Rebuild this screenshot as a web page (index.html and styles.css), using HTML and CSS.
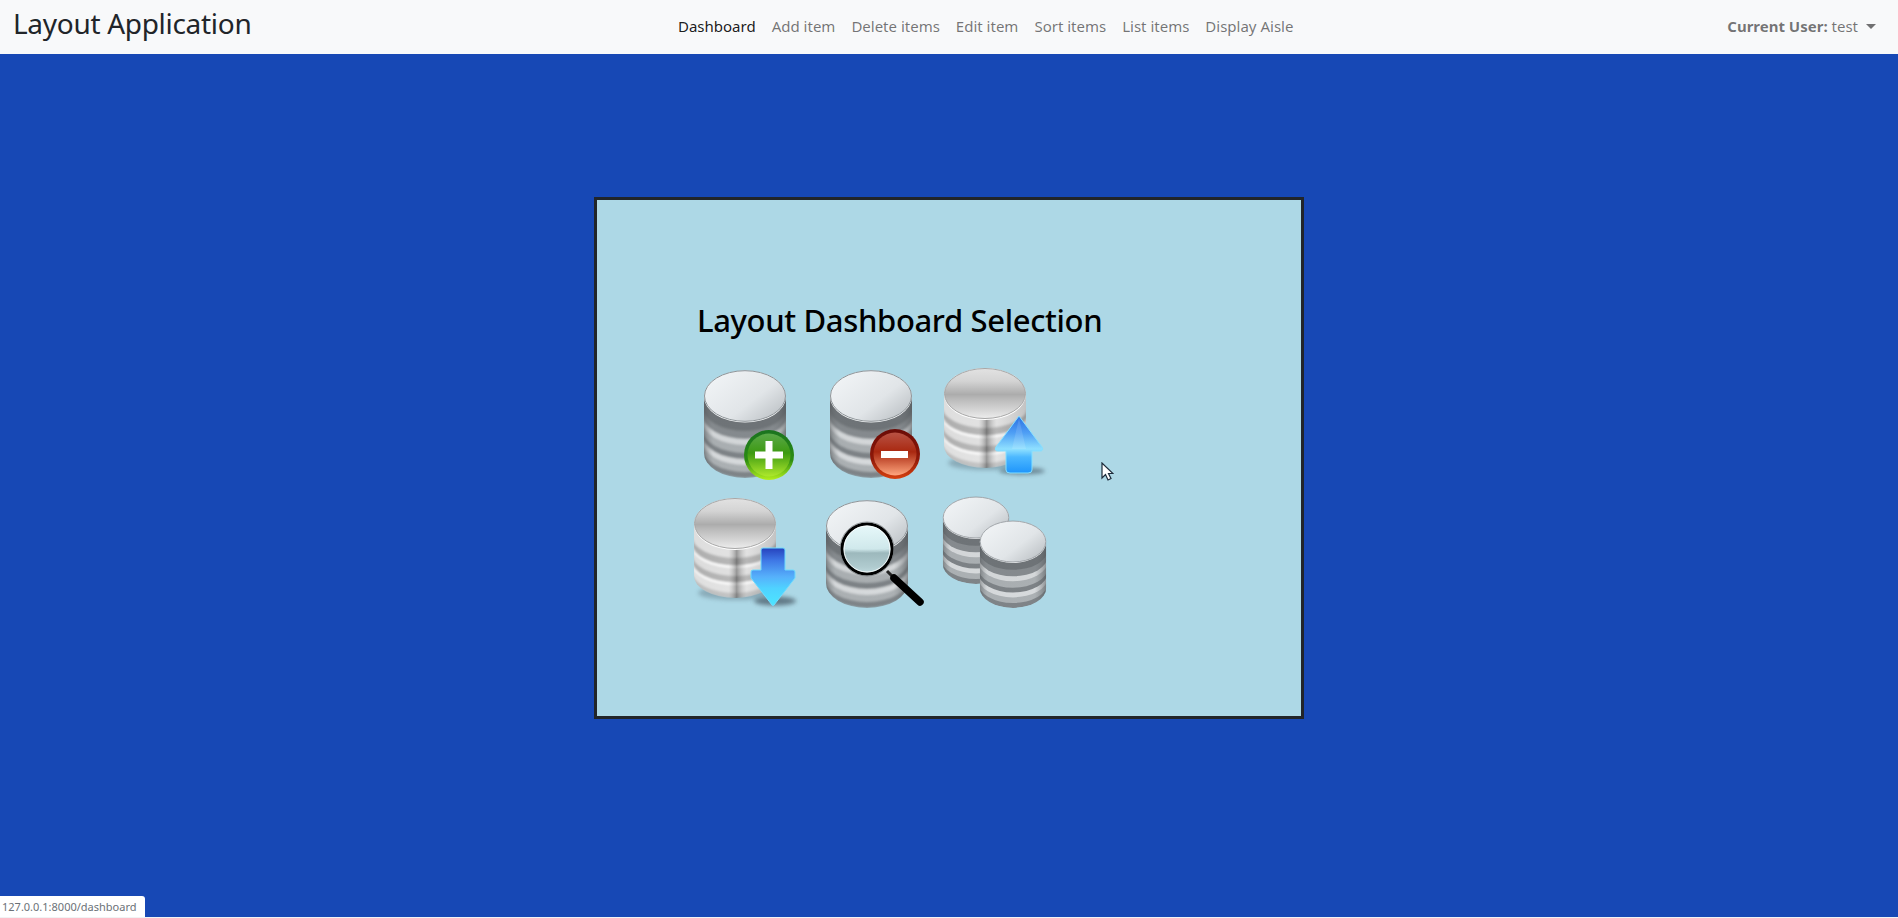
FILE: index.html
```html
<!DOCTYPE html>
<html lang="en">
<head>
<meta charset="utf-8">
<title>Layout Application</title>
<link rel="stylesheet" href="styles.css">
</head>
<body>
<svg class="defs" width="0" height="0" aria-hidden="true">
  <defs>
    <filter id="soft" x="-5%" y="-5%" width="110%" height="110%"><feGaussianBlur stdDeviation="0.8"/></filter>
    <filter id="shade" x="-30%" y="-80%" width="160%" height="260%"><feGaussianBlur stdDeviation="2"/></filter>
    <linearGradient id="face" x1="0" y1="0.1" x2="1" y2="0.9">
      <stop offset="0" stop-color="#f2f5f7"/><stop offset=".6" stop-color="#e1e5e8"/><stop offset="1" stop-color="#b9bec2"/>
    </linearGradient>
    <linearGradient id="edge" x1="0" y1="0" x2="1" y2="0">
      <stop offset="0" stop-color="#4d5154" stop-opacity=".55"/><stop offset=".12" stop-color="#7a7f82" stop-opacity=".1"/><stop offset=".82" stop-color="#7a7f82" stop-opacity=".08"/><stop offset="1" stop-color="#4d5154" stop-opacity=".6"/>
    </linearGradient>
    <linearGradient id="gface" x1="0" y1="0" x2="0" y2="1">
      <stop offset="0" stop-color="#e2e2e2"/><stop offset=".25" stop-color="#d4d4d4"/><stop offset=".52" stop-color="#acacac"/><stop offset=".6" stop-color="#b8b8b8"/><stop offset=".85" stop-color="#d8d8d8"/><stop offset="1" stop-color="#ededed"/>
    </linearGradient>
    <linearGradient id="gedge" x1="0" y1="0" x2="1" y2="0">
      <stop offset="0" stop-color="#fff" stop-opacity=".1"/><stop offset=".42" stop-color="#fff" stop-opacity=".2"/><stop offset=".52" stop-color="#444" stop-opacity=".45"/><stop offset=".64" stop-color="#fff" stop-opacity=".2"/><stop offset="1" stop-color="#777" stop-opacity=".25"/>
    </linearGradient>
    <linearGradient id="grim" x1="0" y1="0" x2="0" y2="1">
      <stop offset="0" stop-color="#1a7320"/><stop offset=".6" stop-color="#2b8c12"/><stop offset="1" stop-color="#b3f01e"/>
    </linearGradient>
    <linearGradient id="gin" x1="0" y1="0" x2="0" y2="1">
      <stop offset="0" stop-color="#5aa84a"/><stop offset=".45" stop-color="#3d9a12"/><stop offset="1" stop-color="#aee82c"/>
    </linearGradient>
    <linearGradient id="rrim" x1="0" y1="0" x2="0" y2="1">
      <stop offset="0" stop-color="#6a0c07"/><stop offset=".6" stop-color="#8f1808"/><stop offset="1" stop-color="#d8420f"/>
    </linearGradient>
    <linearGradient id="rin" x1="0" y1="0" x2="0" y2="1">
      <stop offset="0" stop-color="#b85244"/><stop offset=".45" stop-color="#a92810"/><stop offset="1" stop-color="#ffa67e"/>
    </linearGradient>
    <linearGradient id="aup" x1="0" y1="0" x2="0" y2="1">
      <stop offset="0" stop-color="#2a6fe2"/><stop offset=".3" stop-color="#4f9ff5"/><stop offset=".58" stop-color="#8fe0ff"/><stop offset=".72" stop-color="#4cb8ff"/><stop offset="1" stop-color="#1f95fb"/>
    </linearGradient>
    <linearGradient id="adown" x1="0" y1="0" x2="0" y2="1">
      <stop offset="0" stop-color="#2642bd"/><stop offset=".22" stop-color="#3f78e6"/><stop offset=".5" stop-color="#56b0fb"/><stop offset=".7" stop-color="#4fd2ff"/><stop offset="1" stop-color="#4ce6ff"/>
    </linearGradient>
    <linearGradient id="glass" x1="0" y1="0" x2="0" y2="1">
      <stop offset="0" stop-color="#e8fafb"/><stop offset=".5" stop-color="#cfe9ec"/><stop offset=".58" stop-color="#9fbcc0"/><stop offset="1" stop-color="#bcd8dc"/>
    </linearGradient>
    <clipPath id="sil"><path d="M1 26V83A41 25 0 0 0 83 83V26Z"/></clipPath>
    <clipPath id="gsil"><path d="M1 24V78A41 22 0 0 0 83 78V24Z"/></clipPath>
    <symbol id="db" viewBox="0 0 84 110">
      <g clip-path="url(#sil)">
        <g filter="url(#soft)">
          <path d="M-1 20H85V83A43 25 0 0 1 -1 83Z" fill="#7f8488"/>
          <path d="M-1 20H85V77A43 25 0 0 1 -1 77Z" fill="#b0b5b8"/>
          <path d="M-1 20H85V70A43 25 0 0 1 -1 70Z" fill="#dfe2e4"/>
          <path d="M-1 20H85V64A43 25 0 0 1 -1 64Z" fill="#7d8286"/>
          <path d="M-1 20H85V58A43 25 0 0 1 -1 58Z" fill="#aeb3b6"/>
          <path d="M-1 20H85V50A43 25 0 0 1 -1 50Z" fill="#dcdfe1"/>
          <path d="M-1 20H85V44A43 25 0 0 1 -1 44Z" fill="#868b8f"/>
          <path d="M-1 20H85V36A43 25 0 0 1 -1 36Z" fill="#6d7276"/>
        </g>
        <rect x="0" y="20" width="84" height="90" fill="url(#edge)"/>
      </g>
      <ellipse cx="42" cy="26.5" rx="41" ry="26" fill="#f7f9fa"/>
      <ellipse cx="42" cy="26" rx="40.5" ry="25.3" fill="url(#face)" stroke="#8f9599" stroke-width="1"/>
    </symbol>
    <symbol id="gdb" viewBox="0 0 84 104">
      <g clip-path="url(#gsil)">
        <g filter="url(#soft)">
          <path d="M-1 20H85V78A43 22 0 0 1 -1 78Z" fill="#b5b5b5"/>
          <path d="M-1 20H85V73A43 22 0 0 1 -1 73Z" fill="#dcdcdc"/>
          <path d="M-1 20H85V65A43 22 0 0 1 -1 65Z" fill="#fdfdfd"/>
          <path d="M-1 20H85V62.500A43 22 0 0 1 -1 62.500Z" fill="#a6a6a6"/>
          <path d="M-1 20H85V56A43 22 0 0 1 -1 56Z" fill="#d8d8d8"/>
          <path d="M-1 20H85V48A43 22 0 0 1 -1 48Z" fill="#fdfdfd"/>
          <path d="M-1 20H85V45.500A43 22 0 0 1 -1 45.500Z" fill="#a4a4a4"/>
          <path d="M-1 20H85V38A43 22 0 0 1 -1 38Z" fill="#dadada"/>
        </g>
        <rect x="0" y="20" width="84" height="84" fill="url(#gedge)"/>
      </g>
      <ellipse cx="42" cy="26" rx="41" ry="26" fill="#fff"/>
      <ellipse cx="42" cy="25.5" rx="40.5" ry="25" fill="url(#gface)" stroke="#a6a6a6" stroke-width="1"/>
    </symbol>
  </defs>
</svg>

<header class="navbar">
  <a class="brand" href="#">Layout Application</a>
  <nav class="links">
    <a class="link active" href="#">Dashboard</a>
    <a class="link" href="#">Add item</a>
    <a class="link" href="#">Delete items</a>
    <a class="link" href="#">Edit item</a>
    <a class="link" href="#">Sort items</a>
    <a class="link" href="#">List items</a>
    <a class="link" href="#">Display Aisle</a>
  </nav>
  <a class="user" href="#"><b>Current User:</b> test<span class="caret"></span></a>
</header>

<main class="stage">
  <section class="card">
    <h1 class="title">Layout Dashboard Selection</h1>
    <div class="icons">
      <a href="#" class="icon"><svg viewBox="0 0 120 125" width="120" height="125">
        <use href="#db" x="13" y="5" width="84" height="110"/>
        <circle cx="79" cy="90" r="25" fill="url(#grim)"/>
        <circle cx="79" cy="90" r="21.5" fill="url(#gin)"/>
        <path d="M75.5 76h7v10.500h10.500v7h-10.500v10.500h-7v-10.500h-10.500v-7h10.500z" fill="#fff"/>
      </svg></a>
      <a href="#" class="icon"><svg viewBox="0 0 120 125" width="120" height="125">
        <use href="#db" x="19" y="5" width="84" height="110"/>
        <circle cx="85" cy="89" r="25" fill="url(#rrim)"/>
        <circle cx="85" cy="89" r="21.5" fill="url(#rin)"/>
        <rect x="71" y="86" width="27" height="7" fill="#fff"/>
      </svg></a>
      <a href="#" class="icon"><svg viewBox="0 0 120 125" width="120" height="125">
        <ellipse cx="56" cy="98" rx="38" ry="7" fill="#6d8794" opacity=".55" filter="url(#shade)"/>
        <use href="#gdb" x="13" y="3" width="84" height="104"/>
        <ellipse cx="92" cy="106" rx="23" ry="3.500" fill="#546d7a" opacity=".75" filter="url(#shade)"/>
        <path d="M89 51L112 82Q114 86 110 86H102V105Q102 108 98 108H80Q76 108 76 105V86H68Q64 86 66 82Z" fill="url(#aup)" stroke="#86e0ff" stroke-width="1"/>
        <path d="M89 53L96 84H82Z" fill="#fff" opacity=".12"/>
      </svg></a>
      <a href="#" class="icon"><svg viewBox="0 0 120 125" width="120" height="125">
        <ellipse cx="46" cy="98" rx="38" ry="7" fill="#6d8794" opacity=".55" filter="url(#shade)"/>
        <use href="#gdb" x="3" y="3" width="84" height="104"/>
        <ellipse cx="85" cy="106" rx="21" ry="4.500" fill="#4f6470" opacity=".8" filter="url(#shade)"/>
        <path d="M71 55Q71 53 73 53H93Q95 53 95 55V75H103Q105 75 105 77V83L84 110Q83 111 82 110L61 83V77Q61 75 63 75H71Z" fill="url(#adown)" stroke="#6fdcff" stroke-width="1"/>
      </svg></a>
      <a href="#" class="icon"><svg viewBox="0 0 120 125" width="120" height="125">
        <use href="#db" x="15" y="5" width="84" height="110"/>
        <path d="M77 76L83 82" stroke="#222" stroke-width="3"/>
        <path d="M84 83L110 107" stroke="#000" stroke-width="7.500" stroke-linecap="round"/>
        <circle cx="57" cy="54" r="25" fill="url(#glass)" fill-opacity=".95" stroke="#000" stroke-width="3"/>
        <circle cx="57" cy="54" r="27" fill="none" stroke="#6f7578" stroke-opacity=".7" stroke-width="1"/>
        <circle cx="57" cy="54" r="23" fill="none" stroke="#fff" stroke-opacity=".8" stroke-width="1"/>
      </svg></a>
      <a href="#" class="icon"><svg viewBox="0 0 120 125" width="120" height="125">
        <use href="#db" x="12" y="1" width="68" height="90"/>
        <use href="#db" x="49" y="25" width="68" height="90"/>
      </svg></a>
    </div>
  </section>
</main>

<svg class="cursor" viewBox="0 0 13 20" width="13" height="20" aria-hidden="true">
  <path d="M1 1V16L4.500 12.500L7 18L10 16.500L7.500 11.500H12Z" fill="#fff" stroke="#1c2b3a" stroke-width="1.200"/>
</svg>
<div class="status">127.0.0.1:8000/dashboard</div>
</body>
</html>
```
FILE: styles.css
```css
* { box-sizing: border-box; }
html, body { height: 100%; }
body {
  margin: 0;
  height: 918px;
  overflow: hidden;
  display: flex;
  flex-direction: column;
  background: #f1f3f4;
  font-family: "Noto Sans", "Open Sans", sans-serif;
  position: relative;
}
a { text-decoration: none; color: inherit; }
.defs { position: absolute; }

.navbar {
  height: 54px;
  flex: none;
  display: grid;
  grid-template-columns: 657px auto 1fr;
  align-items: center;
  padding: 0 22px 0 13px;
  background: #f8f9fa;
}
.brand {
  font-size: 28px;
  letter-spacing: -0.3px;
  color: #212529;
  padding-bottom: 8px;
}
.links { display: flex; padding-bottom: 2px; }
.link {
  padding: 0 8px;
  font-size: 15px;
  color: rgba(0, 0, 0, .55);
}
.link.active { color: rgba(0, 0, 0, .9); }
.user {
  justify-self: end;
  font-size: 15px;
  padding-bottom: 2px;
  color: rgba(0, 0, 0, .55);
}
.user b { font-weight: 700; }
.caret {
  display: inline-block;
  margin-left: 8px;
  vertical-align: 3px;
  border-top: 5px solid;
  border-left: 5px solid transparent;
  border-right: 5px solid transparent;
}

.stage {
  flex: none;
  height: 863px;
  background: #1748b5;
  display: flex;
  justify-content: center;
  padding-top: 143px;
}
.card {
  width: 710px;
  height: 522px;
  background: #add8e6;
  border: 3px solid #212529;
  padding: 100px 0 0 93px;
}
.title {
  margin: 0 0 25px 7px;
  font-size: 31px;
  letter-spacing: -0.35px;
  line-height: 40px;
  font-weight: 500;
  color: #000;
}
.icons {
  display: grid;
  grid-template-columns: repeat(3, 120px);
  grid-auto-rows: 125px;
  row-gap: 5px;
}
.icon { display: block; }
.icon svg { display: block; overflow: visible; }

.cursor { position: absolute; left: 1101px; top: 462px; }
.status {
  position: absolute;
  left: 0;
  top: 896px;
  width: 145px;
  height: 21px;
  padding: 2px 0 0 2px;
  background: #fff;
  border-top-right-radius: 3px;
  font-size: 11px;
  line-height: 18px;
  color: #6b7177;
  white-space: nowrap;
}
```
